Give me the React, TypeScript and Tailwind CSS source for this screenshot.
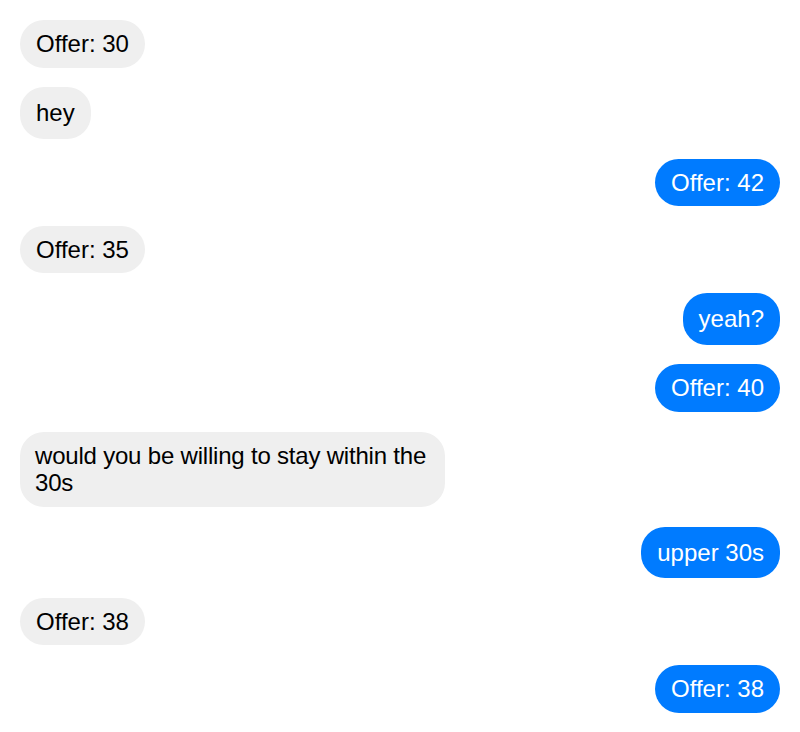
import React from 'react'

type Msg = { text: string; mine: boolean }

const messages: Msg[] = [
  { text: 'Offer: 30', mine: false },
  { text: 'hey', mine: false },
  { text: 'Offer: 42', mine: true },
  { text: 'Offer: 35', mine: false },
  { text: 'yeah?', mine: true },
  { text: 'Offer: 40', mine: true },
  { text: 'would you be willing to stay within the 30s', mine: false },
  { text: 'upper 30s', mine: true },
  { text: 'Offer: 38', mine: false },
  { text: 'Offer: 38', mine: true },
]

const Bubble = ({ text, mine }: Msg) => {
  const isOffer = text.startsWith('Offer:')
  const isLong = text.length > 20
  return (
    <div className={mine ? 'flex justify-end' : 'flex justify-start'}>
      <div
        className={[
          'max-w-[425px] rounded-3xl text-[24px] leading-[27.6px]',
          isOffer || isLong ? 'py-[10px]' : 'py-[12px]',
          isLong ? 'px-[15px] tracking-[-0.2px]' : 'px-[16px]',
          mine ? 'bg-[#007bff] text-white' : 'bg-[#efefef] text-black',
        ].join(' ')}
      >
        {text}
      </div>
    </div>
  )
}

const App = () => {
  return (
    <div
      className="flex min-h-screen w-full flex-col gap-[19.7px] bg-white p-5"
      style={{ fontFamily: '"Liberation Sans", Arial, sans-serif' }}
    >
      {messages.map((m, i) => (
        <Bubble key={i} {...m} />
      ))}
    </div>
  )
}

export default App
